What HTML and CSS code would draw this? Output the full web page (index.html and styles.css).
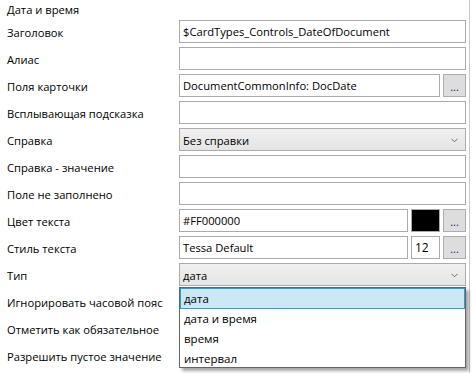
FILE: index.html
```html
<!DOCTYPE html>
<html lang="ru">
<head>
<meta charset="utf-8">
<link rel="stylesheet" href="styles.css">
</head>
<body>
<div class="panel">
  <div class="title">Дата и время</div>
  <div class="grid">
    <div class="label">Заголовок</div>
    <div class="cell"><div class="field">$CardTypes_Controls_DateOfDocument</div></div>

    <div class="label">Алиас</div>
    <div class="cell"><div class="field"></div></div>

    <div class="label">Поля карточки</div>
    <div class="cell"><div class="field">DocumentCommonInfo: DocDate</div><div class="btn">...</div></div>

    <div class="label">Всплывающая подсказка</div>
    <div class="cell"><div class="field"></div></div>

    <div class="label">Справка</div>
    <div class="cell"><div class="combo"><span>Без справки</span><svg class="chev" width="7" height="5" viewBox="0 0 7 5"><path d="M0.5 0.8 L3.5 3.8 L6.5 0.8" fill="none" stroke="#6e6e6e" stroke-width="1"/></svg></div></div>

    <div class="label">Справка - значение</div>
    <div class="cell"><div class="field"></div></div>

    <div class="label">Поле не заполнено</div>
    <div class="cell"><div class="field"></div></div>

    <div class="label">Цвет текста</div>
    <div class="cell"><div class="field">#FF000000</div><div class="swatch"></div><div class="btn">...</div></div>

    <div class="label">Стиль текста</div>
    <div class="cell"><div class="field">Tessa Default</div><div class="num">12</div><div class="btn">...</div></div>

    <div class="label">Тип</div>
    <div class="cell anchor">
      <div class="combo"><span>дата</span><svg class="chev" width="7" height="5" viewBox="0 0 7 5"><path d="M0.5 0.8 L3.5 3.8 L6.5 0.8" fill="none" stroke="#6e6e6e" stroke-width="1"/></svg></div>
      <div class="popup">
        <div class="item selected">дата</div>
        <div class="item">дата и время</div>
        <div class="item">время</div>
        <div class="item">интервал</div>
      </div>
    </div>

    <div class="label">Игнорировать часовой пояс</div>
    <div class="cell"></div>

    <div class="label">Отметить как обязательное</div>
    <div class="cell"></div>

    <div class="label">Разрешить пустое значение</div>
    <div class="cell"></div>
  </div>
</div>
</body>
</html>
```

FILE: styles.css
```css
html, body {
  margin: 0;
  padding: 0;
  background: #ffffff;
}
body {
  font-family: "Open Sans", "Noto Sans", sans-serif;
  font-size: 11.2px;
  color: #000000;
  width: 472px;
  height: 373px;
  overflow: hidden;
}
.panel {
  width: 462px;
  height: 373px;
  padding-left: 7px;
  border-right: 1px solid #c9c9c9;
  box-sizing: content-box;
}
.title {
  height: 20px;
  line-height: 20px;
  padding-top: 0;
  box-sizing: border-box;
}
.grid {
  display: grid;
  grid-template-columns: 172px 287px;
  grid-auto-rows: 23px;
  row-gap: 4px;
}
.label {
  line-height: 23px;
  padding-top: 1px;
  box-sizing: border-box;
  white-space: nowrap;
}
.cell {
  display: flex;
  gap: 3px;
  height: 23px;
}
.anchor {
  position: relative;
}
.field {
  flex: 1;
  border: 1px solid #ababab;
  background: #fff;
  line-height: 22px;
  padding-left: 3px;
  white-space: nowrap;
  overflow: hidden;
}
.btn {
  width: 23px;
  flex: none;
  border: 1px solid #adadad;
  background: #dddddd;
  box-sizing: border-box;
  text-align: center;
  font-size: 11px;
  line-height: 24px;
  color: #1a1a60;
}
.swatch {
  width: 29px;
  flex: none;
  border: 1px solid #ababab;
  background: #000;
  box-sizing: border-box;
}
.num {
  width: 29px;
  flex: none;
  border: 1px solid #ababab;
  box-sizing: border-box;
  line-height: 22px;
  padding-left: 3px;
  font-size: 12px;
}
.combo {
  flex: 1;
  display: flex;
  align-items: center;
  justify-content: space-between;
  border: 1px solid #acacac;
  background: linear-gradient(#f0f0f0, #e5e5e5);
  padding: 1px 7px 0 3px;
}
.chev {
  display: block;
}
.popup {
  position: absolute;
  left: 0;
  top: 24px;
  width: 287px;
  height: 81px;
  box-sizing: border-box;
  border: 1px solid #646464;
  background: #fff;
  box-shadow: 3px 3px 3px rgba(0, 0, 0, 0.35);
  display: flex;
  flex-direction: column;
}
.item {
  height: 20px;
  line-height: 19px;
  padding-left: 3px;
  border: 1px solid transparent;
  margin-top: -1px;
  font-size: 11.5px;
}
.item:first-child {
  margin-top: 0;
}
.item.selected {
  background: #cbe8f6;
  border-color: #26a0da;
}
```
